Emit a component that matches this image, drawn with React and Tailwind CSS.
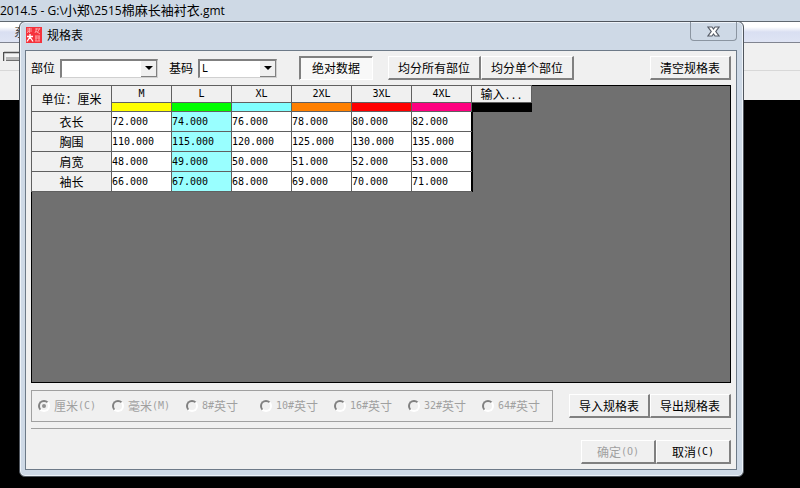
import { useState } from 'react';

const SIZES = [
  { name: 'M', bar: 'bg-[#ffff00]' },
  { name: 'L', bar: 'bg-[#00ff00]' },
  { name: 'XL', bar: 'bg-[#80ffff]' },
  { name: '2XL', bar: 'bg-[#ff8000]' },
  { name: '3XL', bar: 'bg-[#ff0000]' },
  { name: '4XL', bar: 'bg-[#ff0080]' },
];

const ROWS = [
  { part: '衣长', values: ['72.000', '74.000', '76.000', '78.000', '80.000', '82.000'] },
  { part: '胸围', values: ['110.000', '115.000', '120.000', '125.000', '130.000', '135.000'] },
  { part: '肩宽', values: ['48.000', '49.000', '50.000', '51.000', '52.000', '53.000'] },
  { part: '袖长', values: ['66.000', '67.000', '68.000', '69.000', '70.000', '71.000'] },
];

const UNITS = [
  { cn: '厘米', key: '(C)' },
  { cn: '毫米', key: '(M)' },
  { num: '8#', cn: '英寸' },
  { num: '10#', cn: '英寸' },
  { num: '16#', cn: '英寸' },
  { num: '32#', cn: '英寸' },
  { num: '64#', cn: '英寸' },
];

const MONO = "font-['DejaVu_Sans_Mono',monospace] text-[10px]";

// ── Small parts ───────────────────────────────────────────────────────────────

function Mono({ children }) {
  return <span className={`${MONO} leading-3`}>{children}</span>;
}

function Button({ className = '', pressed = false, children, ...rest }) {
  const look = pressed
    ? 'border border-t-[#808080] border-l-[#808080] border-r-white border-b-white bg-[#f8f8f8] shadow-[inset_1px_1px_0_#808080]'
    : 'border-t border-l border-r-2 border-b-2 border-t-white border-l-white border-r-[#808080] border-b-[#808080] bg-[#f0f0f0]';
  return (
    <button
      type="button"
      className={`h-6 flex items-center justify-center whitespace-nowrap disabled:text-[#a0a0a0] ${look} ${className}`}
      {...rest}
    >
      {children}
    </button>
  );
}

function Combo({ id, label, className, options, ...rest }) {
  return (
    <div className="flex items-center gap-[5px]">
      <label htmlFor={id}>{label}</label>
      <div className={`relative h-[19px] ${className}`}>
        <select
          id={id}
          className={`block size-full appearance-none bg-white border-t-2 border-l-2 border-r border-b border-t-[#808080] border-l-[#808080] border-r-[#d0d0d0] border-b-[#d0d0d0] pl-0.5 outline-none ${MONO}`}
          {...rest}
        >
          {options.map((o) => <option key={o}>{o}</option>)}
        </select>
        <span className="pointer-events-none absolute top-0.5 right-px bottom-px w-4 flex items-center justify-center bg-[#f0f0f0] border-r border-b border-[#808080]">
          <svg width="8" height="4" viewBox="0 0 8 4"><path d="M0 0h8L4 4z" /></svg>
        </span>
      </div>
    </div>
  );
}

function SealIcon() {
  return (
    <svg width="16" height="16" viewBox="0 0 16 16" fill="none" aria-hidden="true">
      <rect width="16" height="16" fill="#f5323c" />
      <path d="M1 2h5M1 4h5M3.5 1v5M1 6l2-2M9 2h5M11 1l-2 5M10 4l4 3M14 1l-3 5M9 9h5M9 11h5M10 9v5M13 9v5M9 14h5" stroke="#ff9a9e" />
      <path d="M1 9.500h6M4 7v3L1 14.500M4 10l3 4.500" stroke="#fff" strokeWidth="1.300" />
    </svg>
  );
}

// ── Size table ────────────────────────────────────────────────────────────────

function SizeTable({ base }) {
  return (
    <table className="table-fixed border-collapse w-[500px] -mt-px -ml-px">
      <colgroup>
        <col className="w-20" />
        {SIZES.map((s) => <col key={s.name} className="w-[60px]" />)}
        <col className="w-[60px]" />
      </colgroup>
      <thead>
        <tr className="h-[17px]">
          <th rowSpan={2} className="border border-[#606060] bg-[#f0f0f0] p-0 font-normal">单位：厘米</th>
          {SIZES.map((s) => (
            <th key={s.name} className={`border border-[#606060] bg-[#f0f0f0] p-0 leading-[14px] font-normal ${MONO}`}>{s.name}</th>
          ))}
          <th className="border border-[#606060] bg-[#f0f0f0] p-0 leading-[14px] font-normal">输入<Mono>...</Mono></th>
        </tr>
        <tr className="h-[9px]">
          {SIZES.map((s) => <td key={s.name} className={`border border-[#606060] p-0 ${s.bar}`} />)}
          <td className="border border-black bg-black p-0" />
        </tr>
      </thead>
      <tbody>
        {ROWS.map((row) => (
          <tr key={row.part} className="h-5">
            <th className="border border-[#606060] bg-[#f0f0f0] p-0 font-normal">{row.part}</th>
            {row.values.map((v, i) => (
              <td
                key={i}
                className={`border border-[#606060] p-0 pt-px leading-3 last:border-r-black last:shadow-[1px_0_0_#000] ${MONO} ${SIZES[i].name === base ? 'bg-[#99ffff]' : 'bg-white'}`}
              >
                {v}
              </td>
            ))}
          </tr>
        ))}
      </tbody>
    </table>
  );
}

// ── Window behind the dialog ──────────────────────────────────────────────────

function MainWindow() {
  return (
    <div>
      <div className="h-[21px] bg-[#ced9e5] overflow-hidden whitespace-nowrap leading-[21px] font-['Open_Sans','Noto_Sans_CJK_SC',sans-serif] text-xs">
        2014.5 - G:\<span className="text-[13px]">小郑</span>\2515<span className="text-[13px]">棉麻长袖衬衣</span>.gmt
      </div>
      <div className="h-[22px] bg-linear-to-b from-white from-25% via-[#d9dff2] via-50% to-[#dfe4f4] border-t border-b border-t-[#606870] border-b-[#808490] pl-[14px] leading-5 text-[#404040]">
        系统
      </div>
      <div className="h-7 bg-[#f0f0f0] border-b border-[#d8d8d8] flex items-center">
        <svg className="ml-[3px]" width="20" height="12" viewBox="0 0 20 12" aria-hidden="true">
          <path d="M0.500 1v9" stroke="#505050" strokeWidth="1.500" />
          <path d="M1 1.500h19" stroke="#505050" strokeWidth="1.500" />
          <path d="M3 3h17v3H3z" fill="#f4f4f4" />
          <path d="M3 6h17v3H3z" fill="#b8b8b8" />
          <path d="M3 9.500h17" stroke="#707070" />
        </svg>
      </div>
      <div className="h-[29px] bg-[#f0f0f0]" />
    </div>
  );
}

export default function App() {
  const [base, setBase] = useState('L');
  const [absolute, setAbsolute] = useState(true);

  return (
    <div className="relative min-h-screen bg-black text-black text-xs font-['Noto_Sans_CJK_SC',sans-serif]">
      <MainWindow />

      <div role="dialog" aria-labelledby="title" className="absolute top-[21px] right-14 bottom-[11px] left-[19px] flex flex-col rounded-md border border-[#50565e] bg-[#ced9e6] pr-1.5 pb-1.5 pl-[5px] shadow-[inset_0_0_0_1px_#eef3f9]">
        <div className="flex h-7 shrink-0 items-start justify-between">
          <div className="flex items-center gap-[5px] pt-[5px] pl-px">
            <SealIcon />
            <h1 id="title">规格表</h1>
          </div>
          <button type="button" aria-label="关闭" className="flex h-[19px] w-[47px] items-center justify-center rounded-b border border-t-0 border-[#8b95a1]">
            <svg width="13" height="11" viewBox="0 0 13 11" aria-hidden="true">
              <path d="M1 1h4l1.500 2L8 1h4L8.800 5.500 12 10H8l-1.500-2L5 10H1l3.200-4.500z" fill="#fff" stroke="#555b66" strokeWidth="1.200" />
            </svg>
          </button>
        </div>

        <div className="flex grow flex-col border border-[#6d7a88] bg-[#f0f0f0] px-[5px] pb-[5px]">
          <div className="flex h-[34px] items-center">
            <Combo id="part" label="部位" className="w-[98px]" options={['']} />
            <div className="ml-[11px]">
              <Combo id="base" label="基码" className="w-[79px]" options={SIZES.map((s) => s.name)} value={base} onChange={(e) => setBase(e.target.value)} />
            </div>
            <Button className="ml-[22px] w-[74px]" pressed={absolute} aria-pressed={absolute} onClick={() => setAbsolute(!absolute)}>绝对数据</Button>
            <Button className="ml-[15px] w-[93px]">均分所有部位</Button>
            <Button className="w-[93px]">均分单个部位</Button>
            <Button className="ml-auto w-[81px]">清空规格表</Button>
          </div>

          <div className="grow border border-black bg-[#707070]">
            <SizeTable base={base} />
          </div>

          <div className="mt-[7px] flex items-center justify-between">
            <fieldset disabled className="flex h-8 items-center border border-[#a0a0a0] pl-1.5 text-[#a0a0a0]">
              {UNITS.map((u, i) => (
                <label key={i} className="flex w-[74px] items-center gap-1 whitespace-nowrap last:w-[70px]">
                  <input
                    type="radio"
                    name="unit"
                    defaultChecked={i === 0}
                    className="flex size-3 shrink-0 appearance-none items-center justify-center rounded-full border-2 border-t-[#808080] border-r-white border-b-white border-l-[#808080] checked:before:size-1 checked:before:rounded-full checked:before:bg-[#909090] checked:before:content-['']"
                  />
                  <span className="flex items-center"><Mono>{u.num}</Mono>{u.cn}<Mono>{u.key}</Mono></span>
                </label>
              ))}
            </fieldset>
            <div className="flex">
              <Button className="w-[81px]">导入规格表</Button>
              <Button className="w-[81px]">导出规格表</Button>
            </div>
          </div>

          <div className="mt-1.5 flex justify-end border-t border-[#a0a0a0] pt-[11px]">
            <Button className="w-[75px]" disabled>确定<Mono>(O)</Mono></Button>
            <Button className="w-[75px]">取消<Mono>(C)</Mono></Button>
          </div>
        </div>
      </div>
    </div>
  );
}
